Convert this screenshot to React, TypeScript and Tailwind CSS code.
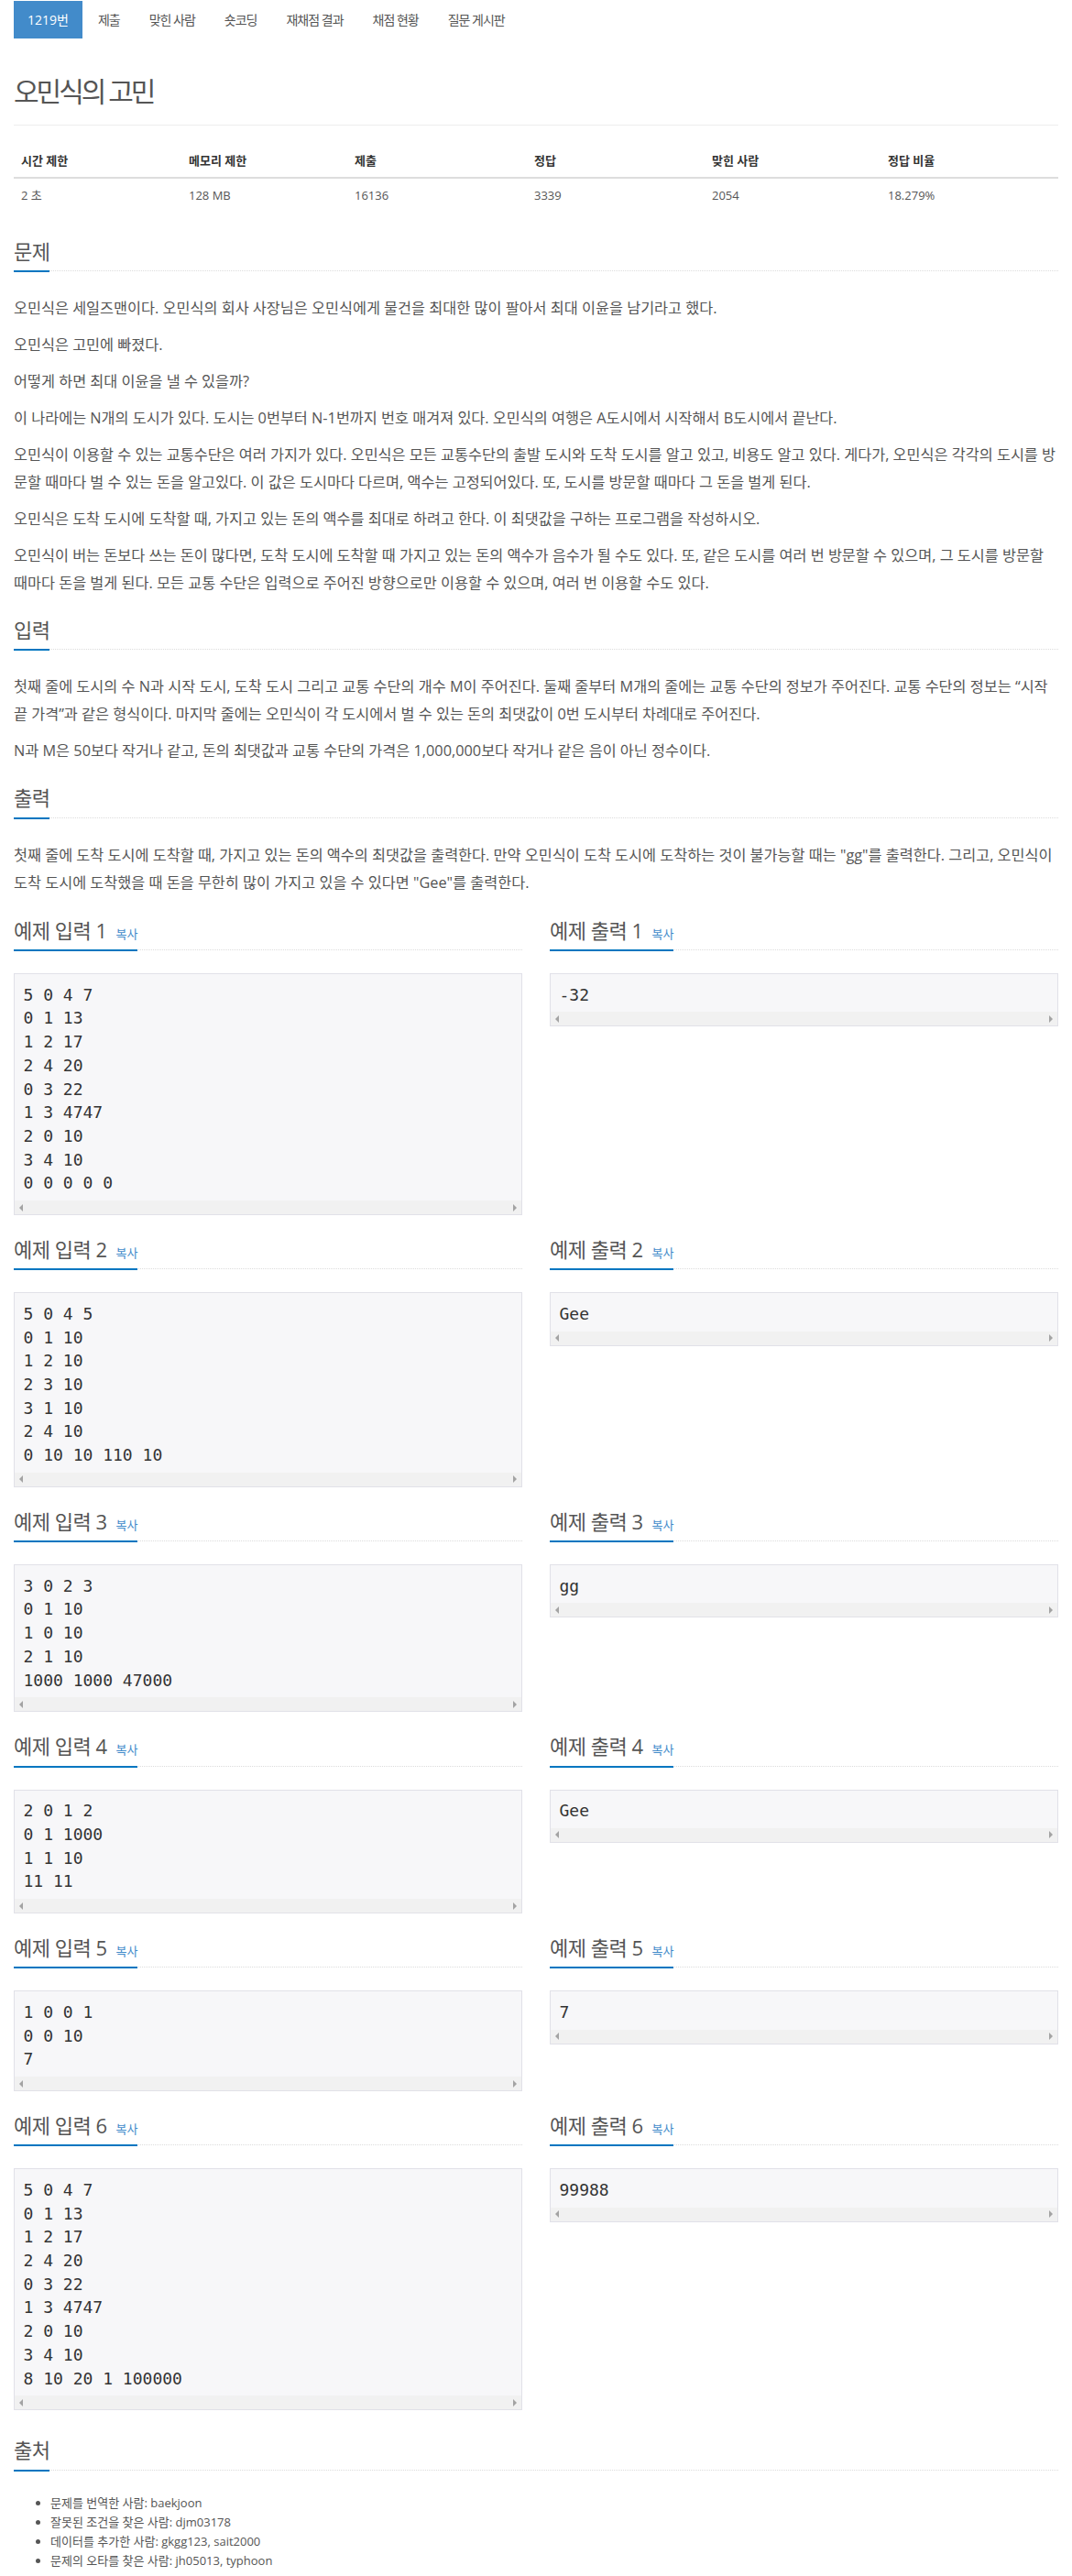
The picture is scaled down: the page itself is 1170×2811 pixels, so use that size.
const tabs = ['1219번', '제출', '맞힌 사람', '숏코딩', '재채점 결과', '채점 현황', '질문 게시판'];

const info = [
  ['시간 제한', '2 초'],
  ['메모리 제한', '128 MB'],
  ['제출', '16136'],
  ['정답', '3339'],
  ['맞힌 사람', '2054'],
  ['정답 비율', '18.279%'],
];

const samples = [
  { input: '5 0 4 7\n0 1 13\n1 2 17\n2 4 20\n0 3 22\n1 3 4747\n2 0 10\n3 4 10\n0 0 0 0 0', output: '-32' },
  { input: '5 0 4 5\n0 1 10\n1 2 10\n2 3 10\n3 1 10\n2 4 10\n0 10 10 110 10', output: 'Gee' },
  { input: '3 0 2 3\n0 1 10\n1 0 10\n2 1 10\n1000 1000 47000', output: 'gg' },
  { input: '2 0 1 2\n0 1 1000\n1 1 10\n11 11', output: 'Gee' },
  { input: '1 0 0 1\n0 0 10\n7', output: '7' },
  { input: '5 0 4 7\n0 1 13\n1 2 17\n2 4 20\n0 3 22\n1 3 4747\n2 0 10\n3 4 10\n8 10 20 1 100000', output: '99988' },
];

function Headline({ title, copy, className = '' }: { title: string; copy?: boolean; className?: string }) {
  return (
    <div className={`flex border-b border-dotted border-[#dcdcdc] mb-[25px] ${className}`}>
      <h2 className="-mb-[2px] border-b-2 border-[#0076c0] pb-[8px] text-[22px] leading-[26.4px] font-normal tracking-[-0.5px] text-[#555]">
        {title}
        {copy && <span className="ml-[10px] text-[13px] leading-none tracking-normal text-[#428bca]">복사</span>}
      </h2>
    </div>
  );
}

function Sample({ text }: { text: string }) {
  return (
    <div className="mb-[10px] border border-[#e1e1e8] bg-[#f7f7f9]">
      <pre className="px-[9.5px] pt-[9.5px] pb-[6px] font-['DejaVu_Sans_Mono',monospace] text-[18px] leading-[1.42857] text-[#333]">
        {text}
      </pre>
      {/* fake horizontal scrollbar */}
      <div className="flex h-[15px] items-center justify-between bg-[#f1f1f1] px-[5px]">
        <span className="h-0 w-0 border-y-[4px] border-r-[4px] border-y-transparent border-r-[#a3a3a3]" />
        <span className="h-0 w-0 border-y-[4px] border-l-[4px] border-y-transparent border-l-[#a3a3a3]" />
      </div>
    </div>
  );
}

function P({ children }: { children: React.ReactNode }) {
  return <p className="mb-[10px] text-[16.3px] leading-[30px]">{children}</p>;
}

export default function App() {
  return (
    <div className="min-h-[2811px] bg-white font-['Open_Sans','Noto_Sans_CJK_KR',sans-serif] text-[#555]">
      <div className="mx-auto flex w-[1170px] flex-col px-[15px]">
        <ul className="mt-[1px] flex gap-[2px] text-[14px]">
          {tabs.map((t, i) => (
            <li
              key={t}
              className={
                i === 0
                  ? 'bg-[#428bca] px-[15px] py-[10px] leading-[21px] text-white'
                  : 'px-[15px] py-[10px] leading-[21px] tracking-[-1px] text-[#555]'
              }
            >
              {t}
            </li>
          ))}
        </ul>

        <div className="mt-[38px] border-b border-[#eee] pb-[16px]">
          <h1 className="text-[30px] leading-[39.6px] font-normal tracking-[-3px] text-[#555]">오민식의 고민</h1>
        </div>

        <div className="mt-[20px] grid grid-cols-[183px_181px_196px_194px_192px_1fr] text-[13px] leading-[20px]">
          {info.map(([h]) => (
            <div key={h} className="border-b-2 border-[#ddd] p-[8px] font-bold text-[#333]">
              {h}
            </div>
          ))}
          {info.map(([h, v]) => (
            <div key={h} className="p-[8px]">
              {v}
            </div>
          ))}
        </div>

        <Headline title="문제" className="mt-[30px]" />
        <P>오민식은 세일즈맨이다. 오민식의 회사 사장님은 오민식에게 물건을 최대한 많이 팔아서 최대 이윤을 남기라고 했다.</P>
        <P>오민식은 고민에 빠졌다.</P>
        <P>어떻게 하면 최대 이윤을 낼 수 있을까?</P>
        <P>이 나라에는 N개의 도시가 있다. 도시는 0번부터 N-1번까지 번호 매겨져 있다. 오민식의 여행은 A도시에서 시작해서 B도시에서 끝난다.</P>
        <P>
          오민식이 이용할 수 있는 교통수단은 여러 가지가 있다. 오민식은 모든 교통수단의 출발 도시와 도착 도시를 알고 있고, 비용도 알고 있다. 게다가, 오민식은 각각의 도시를 방문할 때마다 벌 수 있는 돈을 알고있다. 이 값은 도시마다 다르며, 액수는 고정되어있다. 또, 도시를 방문할 때마다 그 돈을 벌게 된다.
        </P>
        <P>오민식은 도착 도시에 도착할 때, 가지고 있는 돈의 액수를 최대로 하려고 한다. 이 최댓값을 구하는 프로그램을 작성하시오.</P>
        <P>
          오민식이 버는 돈보다 쓰는 돈이 많다면, 도착 도시에 도착할 때 가지고 있는 돈의 액수가 음수가 될 수도 있다. 또, 같은 도시를 여러 번 방문할 수 있으며, 그 도시를 방문할 때마다 돈을 벌게 된다. 모든 교통 수단은 입력으로 주어진 방향으로만 이용할 수 있으며, 여러 번 이용할 수도 있다.
        </P>

        <Headline title="입력" className="mt-[13px]" />
        <P>
          첫째 줄에 도시의 수 N과 시작 도시, 도착 도시 그리고 교통 수단의 개수 M이 주어진다. 둘째 줄부터 M개의 줄에는 교통 수단의 정보가 주어진다. 교통 수단의 정보는 “시작 끝 가격”과 같은 형식이다. 마지막 줄에는 오민식이 각 도시에서 벌 수 있는 돈의 최댓값이 0번 도시부터 차례대로 주어진다.
        </P>
        <P>N과 M은 50보다 작거나 같고, 돈의 최댓값과 교통 수단의 가격은 1,000,000보다 작거나 같은 음이 아닌 정수이다.</P>

        <Headline title="출력" className="mt-[13px]" />
        <P>
          첫째 줄에 도착 도시에 도착할 때, 가지고 있는 돈의 액수의 최댓값을 출력한다. 만약 오민식이 도착 도시에 도착하는 것이 불가능할 때는 "gg"를 출력한다. 그리고, 오민식이 도착 도시에 도착했을 때 돈을 무한히 많이 가지고 있을 수 있다면 "Gee"를 출력한다.
        </P>

        <div className="grid grid-cols-2 gap-x-[30px]">
          {samples.map((s, i) => (
            <div key={i} className="contents">
              <div className="flex flex-col">
                <Headline title={`예제 입력 ${i + 1}`} copy className="mt-[14px]" />
                <Sample text={s.input} />
              </div>
              <div className="flex flex-col">
                <Headline title={`예제 출력 ${i + 1}`} copy className="mt-[14px]" />
                <Sample text={s.output} />
              </div>
            </div>
          ))}
        </div>

        <Headline title="출처" className="mt-[20px] mb-[23px]" />
        <ul className="list-disc pl-[40px] text-[13px] leading-[21px]">
          <li>문제를 번역한 사람: baekjoon</li>
          <li>잘못된 조건을 찾은 사람: djm03178</li>
          <li>데이터를 추가한 사람: gkgg123, sait2000</li>
          <li>문제의 오타를 찾은 사람: jh05013, typhoon</li>
        </ul>
      </div>
    </div>
  );
}
